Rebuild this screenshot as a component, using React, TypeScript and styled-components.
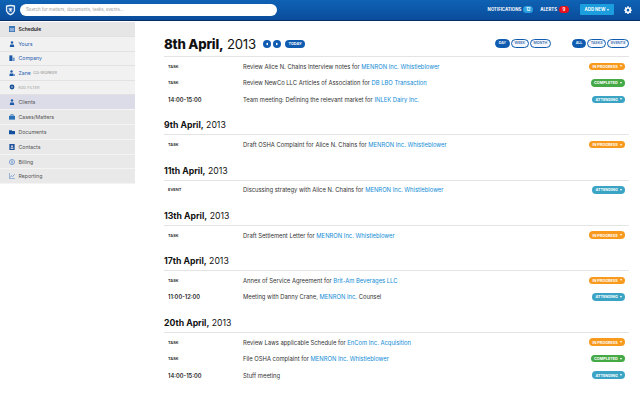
import styled, { createGlobalStyle } from 'styled-components';

type Status = 'progress' | 'completed' | 'attending';

interface EntryType {
  kind: string;
  text: string;
  link?: string;
  suffix?: string;
  status: Status;
}

interface DayType {
  day: string;
  year: string;
  entries: EntryType[];
}

const STATUS_LABEL = { progress: 'IN PROGRESS', completed: 'COMPLETED', attending: 'ATTENDING' };
const STATUS_COLOR = { progress: '#f79a1e', completed: '#45a945', attending: '#3ba3c4' };

const WHISTLE = 'MENRON Inc. Whistleblower';

const DAYS: DayType[] = [
  {
    day: '9th April,',
    year: '2013',
    entries: [{ kind: 'TASK', text: 'Draft OSHA Complaint for Alice N. Chains for ', link: WHISTLE, status: 'progress' }],
  },
  {
    day: '11th April,',
    year: '2013',
    entries: [{ kind: 'EVENT', text: 'Discussing strategy with Alice N. Chains for ', link: WHISTLE, status: 'attending' }],
  },
  {
    day: '13th April,',
    year: '2013',
    entries: [{ kind: 'TASK', text: 'Draft Settlement Letter for ', link: WHISTLE, status: 'progress' }],
  },
  {
    day: '17th April,',
    year: '2013',
    entries: [
      { kind: 'TASK', text: 'Annex of Service Agreement for ', link: 'Brit-Am Beverages LLC', status: 'progress' },
      { kind: '11:00-12:00', text: 'Meeting with Danny Crane, ', link: 'MENRON Inc.', suffix: ' Counsel', status: 'attending' },
    ],
  },
  {
    day: '20th April,',
    year: '2013',
    entries: [
      { kind: 'TASK', text: 'Review Laws applicable Schedule for ', link: 'EnCom Inc. Acquisition', status: 'progress' },
      { kind: 'TASK', text: 'File OSHA complaint for ', link: WHISTLE, status: 'completed' },
      { kind: '14:00-15:00', text: 'Stuff meeting', status: 'attending' },
    ],
  },
];

const FIRST_DAY: EntryType[] = [
  { kind: 'TASK', text: 'Review Alice N. Chains Interview notes for ', link: WHISTLE, status: 'progress' },
  { kind: 'TASK', text: 'Review NewCo LLC Articles of Association for ', link: 'DB LBO Transaction', status: 'completed' },
  { kind: '14:00-15:00', text: 'Team meeting: Defining the relevant market for ', link: 'INLEK Dairy Inc.', status: 'attending' },
];

const NAV = ['Clients', 'Cases/Matters', 'Documents', 'Contacts', 'Billing', 'Reporting'];

function NavIcon({ name }: { name: string }) {
  const c = '#1c5aa8';
  return (
    <IconBox viewBox="0 0 8 8">
      {name === 'Schedule' && (
        <>
          <rect x="0.5" y="0.5" width="7" height="7" fill="#8fb0d8" stroke="#2f6ab0" />
          <rect x="1" y="1" width="6" height="1.5" fill="#2f6ab0" />
        </>
      )}
      {(name === 'Yours' || name === 'Clients') && (
        <>
          <circle cx="4" cy="2" r="1.6" fill={c} />
          <path d="M1 8 L1.6 4.6 H6.4 L7 8 Z" fill={c} />
        </>
      )}
      {name === 'Company' && (
        <>
          <rect x="0.5" y="0.5" width="4" height="7.5" fill={c} />
          <rect x="4.5" y="3.5" width="3" height="4.5" fill="#6f97cc" />
        </>
      )}
      {name === 'Zane' && (
        <>
          <circle cx="3.4" cy="2" r="1.6" fill={c} />
          <path d="M0.5 8 L1 4.6 H5.8 L6.4 8 Z" fill={c} />
          <rect x="5.5" y="5.5" width="2.5" height="2.5" fill="#6f97cc" />
        </>
      )}
      {name === 'Add' && (
        <>
          <circle cx="4" cy="4" r="3.2" fill="#174f96" />
          <circle cx="4" cy="4" r="1" fill="#e8e8e8" />
        </>
      )}
      {name === 'Cases/Matters' && (
        <>
          <rect x="0" y="2.5" width="8" height="5" fill="#2a70b8" />
          <rect x="2.5" y="1" width="3" height="2" fill="none" stroke="#2a70b8" />
        </>
      )}
      {name === 'Documents' && <path d="M0 1.5 H3.5 L4.5 2.5 H8 V7 H0 Z" fill="#124f9e" />}
      {name === 'Contacts' && (
        <>
          <rect x="0.5" y="0" width="7" height="8" fill="#1c4f9c" />
          <circle cx="4" cy="3" r="1.2" fill="#e8e8e8" />
          <rect x="2.2" y="4.8" width="3.6" height="1.6" fill="#e8e8e8" />
        </>
      )}
      {name === 'Billing' && (
        <>
          <circle cx="4" cy="4" r="3.4" fill="none" stroke="#5f8ecb" />
          <path d="M5.2 2.6 H3.2 V4 H4.9 V5.5 H2.8" fill="none" stroke="#5f8ecb" strokeWidth="0.8" />
        </>
      )}
      {name === 'Reporting' && (
        <path d="M0.5 0 V7.5 H8 M1.5 6 L3.2 3.5 L4.8 4.8 L7.5 1.5" fill="none" stroke="#5f8ecb" strokeWidth="0.9" />
      )}
    </IconBox>
  );
}

function DayEntries({ entries }: { entries: EntryType[] }) {
  return (
    <>
      {entries.map((entry, idx) => {
        const isTime = entry.kind.includes(':');
        return (
          <Entry key={idx}>
            <Kind $time={isTime}>{entry.kind}</Kind>
            <Title>
              {entry.text}
              {entry.link ? <EntryLink>{entry.link}</EntryLink> : null}
              {entry.suffix}
            </Title>
            <Badge $status={entry.status}>
              {STATUS_LABEL[entry.status]}
              <Caret />
            </Badge>
          </Entry>
        );
      })}
    </>
  );
}

export default function App() {
  return (
    <Page>
      <GlobalStyle />
      <Header>
        <Logo viewBox="0 0 12 12">
          <path d="M1 1.2 Q6 -0.4 11 1.2 V7 Q10 10 6 12 Q2 10 1 7 Z" fill="#e8f0fa" />
          <path d="M2.4 2.4 Q6 1.4 9.6 2.4 V6.8 Q8.8 9 6 10.4 Q3.2 9 2.4 6.8 Z" fill="#1a5fae" />
          <path d="M4 4 H8 V5.2 L6.6 6 L8 7.6 H4 L5.4 6 L4 5.2 Z" fill="#e8f0fa" />
        </Logo>
        <Search>Search for matters, documents, tasks, events...</Search>
        <HeaderRight>
          <HeaderLabel>NOTIFICATIONS</HeaderLabel>
          <Count $color="#2aa0e0">12</Count>
          <HeaderLabel $gap={7}>ALERTS</HeaderLabel>
          <Count $color="#e8101c">9</Count>
          <AddNew>
            ADD NEW
            <Caret />
          </AddNew>
          <Gear viewBox="0 0 24 24">
            <path
              fill="#fff"
              fillRule="evenodd"
              d="M10 1h4l.6 3.2 1.8.8L19.100 3.100l2.800 2.800L20 8.600l.8 1.800L24 11v3l-3.200.6-.8 1.800 1.900 2.700-2.800 2.800L16.400 20l-1.800.8L14 24h-4l-.6-3.200-1.800-.8-2.700 1.900-2.800-2.800L4 16.400l-.8-1.800L0 14v-3l3.200-.6.8-1.800-1.900-2.700 2.800-2.800L7.600 5l1.800-.8zM12 8.500a4 4 0 1 0 0 8 4 4 0 0 0 0-8z"
            />
          </Gear>
        </HeaderRight>
      </Header>
      <Body>
        <Sidebar>
          <SideHead>
            <NavIcon name="Schedule" />
            Schedule
          </SideHead>
          <SubItem>
            <NavIcon name="Yours" />
            Yours
          </SubItem>
          <SubItem>
            <NavIcon name="Company" />
            Company
          </SubItem>
          <SubItem>
            <NavIcon name="Zane" />
            Zane <SubNote>CO-WORKER</SubNote>
          </SubItem>
          <AddFilter>
            <NavIcon name="Add" />
            ADD FILTER
          </AddFilter>
          {NAV.map((name) => (
            <NavItem key={name} $active={name === 'Clients'}>
              <NavIcon name={name} />
              {name}
            </NavItem>
          ))}
        </Sidebar>
        <Main>
          <TopBar>
            <BigDate>
              <strong>8th April,</strong> 2013
            </BigDate>
            <RoundButton>
              <Arrow viewBox="0 0 4 4">
                <path d="M3 0.5 V3.500 L0.800 2 Z" fill="#fff" />
              </Arrow>
            </RoundButton>
            <RoundButton>
              <Arrow viewBox="0 0 4 4">
                <path d="M1 0.5 V3.500 L3.200 2 Z" fill="#fff" />
              </Arrow>
            </RoundButton>
            <TodayButton>TODAY</TodayButton>
            <Toggles>
              <Toggle $on>DAY</Toggle>
              <Toggle>WEEK</Toggle>
              <Toggle>MONTH</Toggle>
              <ToggleGap />
              <Toggle $on>ALL</Toggle>
              <Toggle>TASKS</Toggle>
              <Toggle>EVENTS</Toggle>
            </Toggles>
          </TopBar>
          <DayList>
            <DayEntries entries={FIRST_DAY} />
          </DayList>
          {DAYS.map((day) => (
            <DayBlock key={day.day}>
              <DayHeading>
                <strong>{day.day}</strong> {day.year}
              </DayHeading>
              <DayList>
                <DayEntries entries={day.entries} />
              </DayList>
            </DayBlock>
          ))}
        </Main>
      </Body>
    </Page>
  );
}

const GlobalStyle = createGlobalStyle`
  html, body {
    margin: 0;
    padding: 0;
    background: #fff;
  }
  body {
    font-family: 'Inter', 'Liberation Sans', sans-serif;
    color: #222;
  }
  * {
    box-sizing: border-box;
  }
`;

const Page = styled.div`
  width: 640px;
  height: 400px;
  overflow: hidden;
`;

const Header = styled.header`
  display: flex;
  align-items: center;
  height: 21px;
  padding: 0 8px 1px 5px;
  background: linear-gradient(#0f62b4, #0a4c9c);
  border-bottom: 1px solid #0a2a66;
`;

const Logo = styled.svg`
  width: 11px;
  height: 12px;
`;

const Search = styled.div`
  width: 257px;
  height: 12px;
  margin-left: 4px;
  padding-left: 6px;
  border-radius: 6px;
  background: #fff;
  color: #9a9a9a;
  font-size: 4.400px;
  line-height: 12px;
`;

const HeaderRight = styled.div`
  display: flex;
  align-items: center;
  margin-left: auto;
`;

const HeaderLabel = styled.span<{ $gap?: number }>`
  margin-left: ${({ $gap }) => $gap ?? 0}px;
  color: #fff;
  font-size: 4.300px;
  font-weight: 700;
`;

const Count = styled.span<{ $color: string }>`
  min-width: 10px;
  height: 7px;
  margin-left: 2px;
  padding: 0 2px;
  border-radius: 4px;
  background: ${({ $color }) => $color};
  color: #fff;
  font-size: 4.300px;
  font-weight: 700;
  line-height: 7px;
  text-align: center;
`;

const AddNew = styled.div`
  display: flex;
  align-items: center;
  justify-content: center;
  gap: 2px;
  width: 34px;
  height: 11px;
  margin-left: 11px;
  border-radius: 1px;
  background: #1c9ddd;
  color: #fff;
  font-size: 4.300px;
  font-weight: 700;
`;

const Gear = styled.svg`
  width: 8px;
  height: 8px;
  margin-left: 10px;
`;

const Body = styled.div`
  display: flex;
  height: 379px;
`;

const Sidebar = styled.nav`
  flex: none;
  width: 135px;
  align-self: flex-start;
  margin-top: 1px;
  background: #f1f1f1;
`;

const IconBox = styled.svg`
  flex: none;
  width: 6px;
  height: 6px;
`;

const rowBase = `
  display: flex;
  align-items: center;
  gap: 3.5px;
  padding-left: 9px;
  font-size: 5.2px;
  border-bottom: 1px solid #e2e2e2;
`;

const SideHead = styled.div`
  ${rowBase}
  height: 15px;
  background: #e6e6e6;
  color: #222;
  font-size: 5px;
  font-weight: 600;
`;

const SubItem = styled.div`
  ${rowBase}
  height: 14.500px;
  color: #2a5fb0;
`;

const SubNote = styled.span`
  margin-left: -1px;
  color: #8a8a8a;
  font-size: 3.800px;
`;

const AddFilter = styled.div`
  ${rowBase}
  height: 14.500px;
  gap: 3px;
  color: #a0a0a0;
  font-size: 3.800px;
`;

const NavItem = styled.div<{ $active?: boolean }>`
  ${rowBase}
  height: 14.900px;
  background: ${({ $active }) => ($active ? '#dcdce8' : '#e9e9e9')};
  border-bottom-color: #f4f4f4;
  color: #555;
`;

const Main = styled.main`
  flex: 1;
  padding: 14px 11px 0 29px;
`;

const TopBar = styled.div`
  display: flex;
  align-items: center;
  height: 22px;
  padding-bottom: 4px;
  border-bottom: 1px solid #e4e4e4;
`;

const BigDate = styled.h1`
  margin: 0 7px 0 0;
  color: #111;
  font-size: 13.200px;
  font-weight: 400;
  letter-spacing: -0.2px;

  strong {
    font-weight: 800;
  }
`;

const RoundButton = styled.span`
  display: flex;
  align-items: center;
  justify-content: center;
  width: 8px;
  height: 8px;
  margin-right: 2px;
  border-radius: 50%;
  background: #0f5bb0;
`;

const Arrow = styled.svg`
  width: 4px;
  height: 4px;
`;

const TodayButton = styled.span`
  height: 8px;
  margin-left: 2px;
  padding: 0 3.500px;
  border-radius: 4px;
  background: #0f5bb0;
  color: #fff;
  font-size: 3.800px;
  font-weight: 700;
  line-height: 8px;
`;

const Toggles = styled.div`
  display: flex;
  gap: 1px;
  margin-left: auto;
`;

const Toggle = styled.span<{ $on?: boolean }>`
  height: 9px;
  padding: 0 2.700px;
  border: 1px solid #0f5bb0;
  border-radius: 4.500px;
  background: ${({ $on }) => ($on ? '#0f5bb0' : '#f4f7fc')};
  color: ${({ $on }) => ($on ? '#fff' : '#3f6fb0')};
  font-size: 3.600px;
  font-weight: 600;
  line-height: 7px;
`;

const ToggleGap = styled.span`
  width: 19px;
`;

const DayList = styled.div`
  display: flex;
  flex-direction: column;
  padding-top: 1px;
`;

const DayBlock = styled.section`
  margin-top: 12.800px;
`;

const DayHeading = styled.h2`
  margin: 0;
  height: 15px;
  border-bottom: 1px solid #e4e4e4;
  color: #111;
  font-size: 8.700px;
  font-weight: 400;
  line-height: 10px;

  strong {
    font-weight: 700;
  }
`;

const Entry = styled.div`
  display: flex;
  align-items: center;
  height: 16.500px;
  padding: 0 4px;
`;

const Kind = styled.span<{ $time: boolean }>`
  flex: none;
  width: 75px;
  color: #222;
  font-size: ${({ $time }) => ($time ? 5.700 : 4)}px;
  font-weight: 600;
`;

const Title = styled.span`
  color: #333;
  font-size: 5.850px;
`;

const EntryLink = styled.span`
  color: #0f8bd6;
`;

const Badge = styled.span<{ $status: Status }>`
  display: flex;
  align-items: center;
  gap: 2px;
  height: 7.500px;
  margin-left: auto;
  padding: 0 3.200px;
  border-radius: 4px;
  background: ${({ $status }) => STATUS_COLOR[$status]};
  color: #fff;
  font-size: 3.800px;
  font-weight: 700;
`;

const Caret = styled.i`
  width: 0;
  height: 0;
  border-left: 1.500px solid transparent;
  border-right: 1.500px solid transparent;
  border-top: 2px solid #fff;
`;
